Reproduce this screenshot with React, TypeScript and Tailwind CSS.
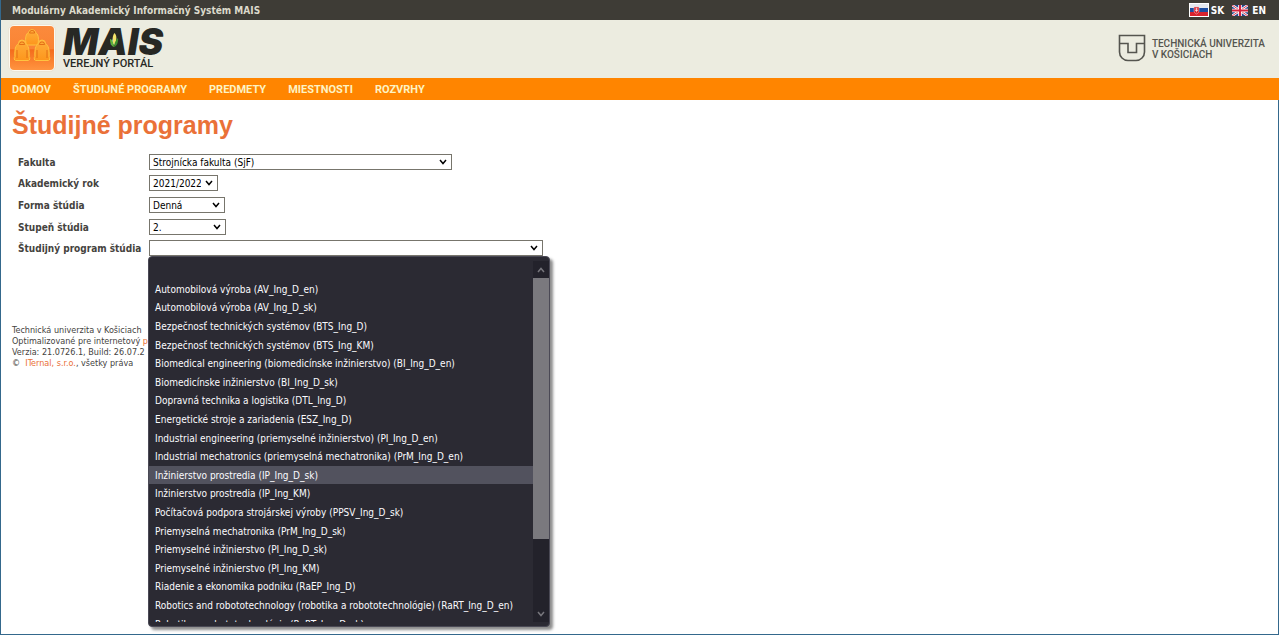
import React, { useState } from 'react';

interface FieldProps {
  id: string;
  label: string;
  width: string;
  options: string[];
}

const NAV_ITEMS = ['DOMOV', 'ŠTUDIJNÉ PROGRAMY', 'PREDMETY', 'MIESTNOSTI', 'ROZVRHY'];

const PROGRAMS = [
  '',
  'Automobilová výroba (AV_Ing_D_en)',
  'Automobilová výroba (AV_Ing_D_sk)',
  'Bezpečnosť technických systémov (BTS_Ing_D)',
  'Bezpečnosť technických systémov (BTS_Ing_KM)',
  'Biomedical engineering (biomedicínske inžinierstvo) (BI_Ing_D_en)',
  'Biomedicínske inžinierstvo (BI_Ing_D_sk)',
  'Dopravná technika a logistika (DTL_Ing_D)',
  'Energetické stroje a zariadenia (ESZ_Ing_D)',
  'Industrial engineering (priemyselné inžinierstvo) (PI_Ing_D_en)',
  'Industrial mechatronics (priemyselná mechatronika) (PrM_Ing_D_en)',
  'Inžinierstvo prostredia (IP_Ing_D_sk)',
  'Inžinierstvo prostredia (IP_Ing_KM)',
  'Počítačová podpora strojárskej výroby (PPSV_Ing_D_sk)',
  'Priemyselná mechatronika (PrM_Ing_D_sk)',
  'Priemyselné inžinierstvo (PI_Ing_D_sk)',
  'Priemyselné inžinierstvo (PI_Ing_KM)',
  'Riadenie a ekonomika podniku (RaEP_Ing_D)',
  'Robotics and robototechnology (robotika a robototechnológie) (RaRT_Ing_D_en)',
  'Robotika a robototechnológie (RaRT_Ing_D_sk)',
];

function Chevron({ up = false, className }: { up?: boolean; className?: string }) {
  return (
    <svg viewBox="0 0 8 6" className={className} fill="none" stroke="currentColor" strokeWidth="1.5" aria-hidden="true">
      <path d={up ? 'M1 5 4 1.5 7 5' : 'M1 1 4 4.5 7 1'} />
    </svg>
  );
}

function Portal() {
  return (
    <svg viewBox="0 0 48 48" className="size-12" aria-hidden="true">
      <defs>
        <linearGradient id="tile" x1="0" y1="0" x2="0" y2="1">
          <stop offset="0" stopColor="#fb8a3c" />
          <stop offset="0.52" stopColor="#fa8434" />
          <stop offset="0.54" stopColor="#f46c1c" />
          <stop offset="1" stopColor="#ff9440" />
        </linearGradient>
        <linearGradient id="bag" x1="0" y1="0" x2="0" y2="1">
          <stop offset="0" stopColor="#ffae3c" />
          <stop offset="1" stopColor="#fd961c" />
        </linearGradient>
      </defs>
      <rect x="0.5" y="0.5" width="47" height="47" rx="6" fill="#fdf9ef" stroke="#e2dccb" strokeWidth="0.6" />
      <rect x="2" y="2" width="44" height="44" rx="4" fill="url(#tile)" />
      <g fill="url(#bag)" stroke="#ffc340" strokeWidth="1">
        <path d="M20.500 8.500a3.700 3.700 0 0 1 7.200 0c2.800 1.500 3 6 2.600 9.500 0 2-1 3-3 3h-6.500c-2 0-3-1-3-3-.4-3.500-.3-8 2.700-9.500z" />
        <path d="M10.500 19.500a3.500 3.500 0 0 1 7 0c3 2 4 6 3.600 13 1.200 1 .8 4-.8 4H7.700c-1.600 0-2-3-.8-4-.4-7 .6-11 3.600-13z" />
        <path d="M30.500 19.500a3.500 3.500 0 0 1 7 0c3 2 4 6 3.600 13 1.200 1 .8 4-.8 4H27.700c-1.600 0-2-3-.8-4-.4-7 .6-11 3.600-13z" />
      </g>
      <g fill="none" stroke="#e06a12" strokeWidth="0.9">
        <path d="M21.500 9a2.600 2.600 0 0 1 5.200 0zM11.400 20.500a2.600 2.600 0 0 1 5.200 0zM31.400 20.500a2.600 2.600 0 0 1 5.200 0zM9 26v8M19 26v8M29 26v8M39 26v8" />
      </g>
    </svg>
  );
}

function Corn() {
  return (
    <svg viewBox="0 0 10 16" className="absolute top-[7px] left-[46px] h-4 w-[10px]" aria-hidden="true">
      <path d="M5.500 1C8 3 8 9 5.500 13 3 10 3 4 5.500 1z" fill="#f3e36a" />
      <path d="M1 7c2 0 3.500 3 4 8-3-1-4-4-4-8z" fill="#5fae3c" />
      <path d="M9 6C7 8 5.500 10 5 15c3-1 4.500-5 4-9z" fill="#3f8f2f" />
    </svg>
  );
}

function SlovakFlag() {
  return (
    <svg viewBox="0 0 20 14" className="h-[14px] w-5" aria-hidden="true">
      <path fill="#fff" d="M0 0h20v14H0z" />
      <path fill="#e4e7ee" d="M1 1h18v4H1z" />
      <path fill="#1c4da1" d="M1 5h18v4H1z" />
      <path fill="#d8232e" d="M1 9h18v4H1z" />
      <path d="M5 4h5v4c0 1.500-1.200 2.400-2.500 3C6.200 10.400 5 9.500 5 8z" fill="#d8232e" stroke="#f3c3c8" strokeWidth="0.5" />
      <path d="M7.500 4.800v4.400M6.300 6h2.400M6 7.500h3" stroke="#fff" strokeWidth="0.6" />
    </svg>
  );
}

function BritishFlag() {
  return (
    <svg viewBox="0 0 16 11" className="h-[11px] w-4" aria-hidden="true">
      <path fill="#24468e" d="M0 0h16v11H0z" />
      <path d="M0 0l16 11M16 0 0 11" stroke="#fff" strokeWidth="2.4" />
      <path d="M0 0l16 11M16 0 0 11" stroke="#d4213d" strokeWidth="0.9" />
      <path d="M8 0v11M0 5.500h16" stroke="#fff" strokeWidth="3.6" />
      <path d="M8 0v11M0 5.500h16" stroke="#d4213d" strokeWidth="2" />
    </svg>
  );
}

function Field({ id, label, width, options }: FieldProps) {
  return (
    <div className="flex items-center">
      <label htmlFor={id} className="w-[131px] shrink-0 pt-[2px] text-[10px] leading-4 font-bold">{label}</label>
      <div className={`relative ${width}`}>
        <select
          id={id}
          className="block h-4 w-full appearance-none border border-[#77756c] bg-white pt-px pr-4 pl-[3px] text-[10px] leading-[13px] text-black outline-none"
        >
          {options.map(option => (
            <option key={option}>{option}</option>
          ))}
        </select>
        <Chevron className="pointer-events-none absolute top-[5px] right-[5px] h-[6px] w-2 text-black" />
      </div>
    </div>
  );
}

function ProgramList() {
  const [active, setActive] = useState(11);

  return (
    <div className="absolute top-[105px] left-[136px] z-10 flex h-[371px] w-[402px] overflow-hidden rounded border border-[#4a4955] bg-[#2b2a33] py-1 shadow-[3px_3px_3px_rgba(0,0,0,0.45)]">
      <div className="flex-1 overflow-hidden">
        <ul role="listbox" aria-label="Študijný program štúdia" className="grid h-[372px] auto-rows-fr">
          {PROGRAMS.map((program, i) => (
            <li
              key={program}
              role="option"
              aria-selected={i === active}
              onMouseEnter={() => setActive(i)}
              className={`flex items-center pt-[2px] pl-[6px] text-[10px] leading-4 whitespace-nowrap text-[#fbfbfe] ${i === active ? 'bg-[#52525e]' : ''}`}
            >
              {program}
            </li>
          ))}
        </ul>
      </div>
      <div className="flex w-4 flex-col bg-[#23222b] text-[#77767c]">
        <span className="flex h-[17px] items-center justify-center"><Chevron up className="h-[6px] w-2" /></span>
        <span className="h-[261px] bg-[#7a797e]" />
        <span className="mt-auto flex h-[17px] items-center justify-center"><Chevron className="h-[6px] w-2" /></span>
      </div>
    </div>
  );
}

export default function App() {
  return (
    <div className="flex min-h-screen flex-col overflow-hidden border-b border-l border-[#34688c] bg-white font-['DejaVu_Sans_Condensed','DejaVu_Sans',sans-serif] text-[#45433e]">
      <div className="flex h-5 items-center justify-between bg-[#3e3c36] pr-[13px] pl-[11px] text-[10px] font-bold text-[#dcdacb]">
        <span>Modulárny Akademický Informačný Systém MAIS</span>
        <div className="flex items-center gap-2 text-white">
          <a href="#sk" className="flex items-center gap-[2px]"><SlovakFlag />SK</a>
          <a href="#en" className="flex items-center gap-1"><BritishFlag />EN</a>
        </div>
      </div>

      <header className="flex h-[58px] items-center justify-between bg-[#ecece0] pr-[14px] pb-[2px] pl-[7px]">
        <a href="#domov" className="flex items-center gap-[7px]">
          <Portal />
          <span className="relative flex flex-col pt-[2px] text-[#272824]">
            <span className="font-['Inter',sans-serif] text-[37px] leading-[30px] font-black italic">MAIS</span>
            <span className="font-['Roboto',sans-serif] text-[11px] leading-[14px] font-medium">VEREJNÝ PORTÁL</span>
            <Corn />
          </span>
        </a>
        <a href="#tuke" className="flex items-center gap-[6px] text-[#55554f]">
          <svg viewBox="0 0 28 28" className="size-7" fill="none" stroke="currentColor" strokeWidth="1.6" aria-hidden="true">
            <path d="M1.500 1.500h25V18a8.500 8.500 0 0 1-8.500 8.500h-8A8.500 8.500 0 0 1 1.500 18z" />
            <path d="M1.500 9.500H10V18.500h8.500V9.500h8" />
          </svg>
          <span className="pt-px font-['Roboto',sans-serif] text-[10px] leading-[11px] font-medium">
            TECHNICKÁ UNIVERZITA<br />V KOŠICIACH
          </span>
        </a>
      </header>

      <nav className="flex h-[22px] items-center gap-[22px] bg-[#ff8500] pt-[2px] pl-[11px] font-['Roboto',sans-serif] text-[11px] font-bold text-[#fdf3c4]">
        {NAV_ITEMS.map(item => (
          <a key={item} href="#menu">{item}</a>
        ))}
      </nav>

      <main className="flex-1 border-r border-[#34688c] pl-[11px]">
        <h1 className="pt-[9px] font-['Liberation_Sans',sans-serif] text-[25px] leading-8 font-bold text-[#ea7138]">Študijné programy</h1>

        <form className="relative mt-[10px] grid h-[108px] grid-rows-5 pl-[6px]">
          <Field id="fakulta" label="Fakulta" width="w-[303px]" options={['Strojnícka fakulta (SjF)']} />
          <Field id="rok" label="Akademický rok" width="w-[69px]" options={['2021/2022']} />
          <Field id="forma" label="Forma štúdia" width="w-[76px]" options={['Denná']} />
          <Field id="stupen" label="Stupeň štúdia" width="w-[77px]" options={['2.']} />
          <Field id="program" label="Študijný program štúdia" width="w-[394px]" options={PROGRAMS} />
          <ProgramList />
        </form>

        <footer className="mt-[66px] text-[9px] leading-[11px]">
          <p>Technická univerzita v Košiciach</p>
          <p>Optimalizované pre internetový <a href="#prehliadac" className="text-[#ea7138]">p</a></p>
          <p>Verzia: 21.0726.1, Build: 26.07.2</p>
          <p>©&nbsp; <a href="#iternal" className="text-[#ea7138]">ITernal, s.r.o.</a>, všetky práva</p>
        </footer>
      </main>
    </div>
  );
}
